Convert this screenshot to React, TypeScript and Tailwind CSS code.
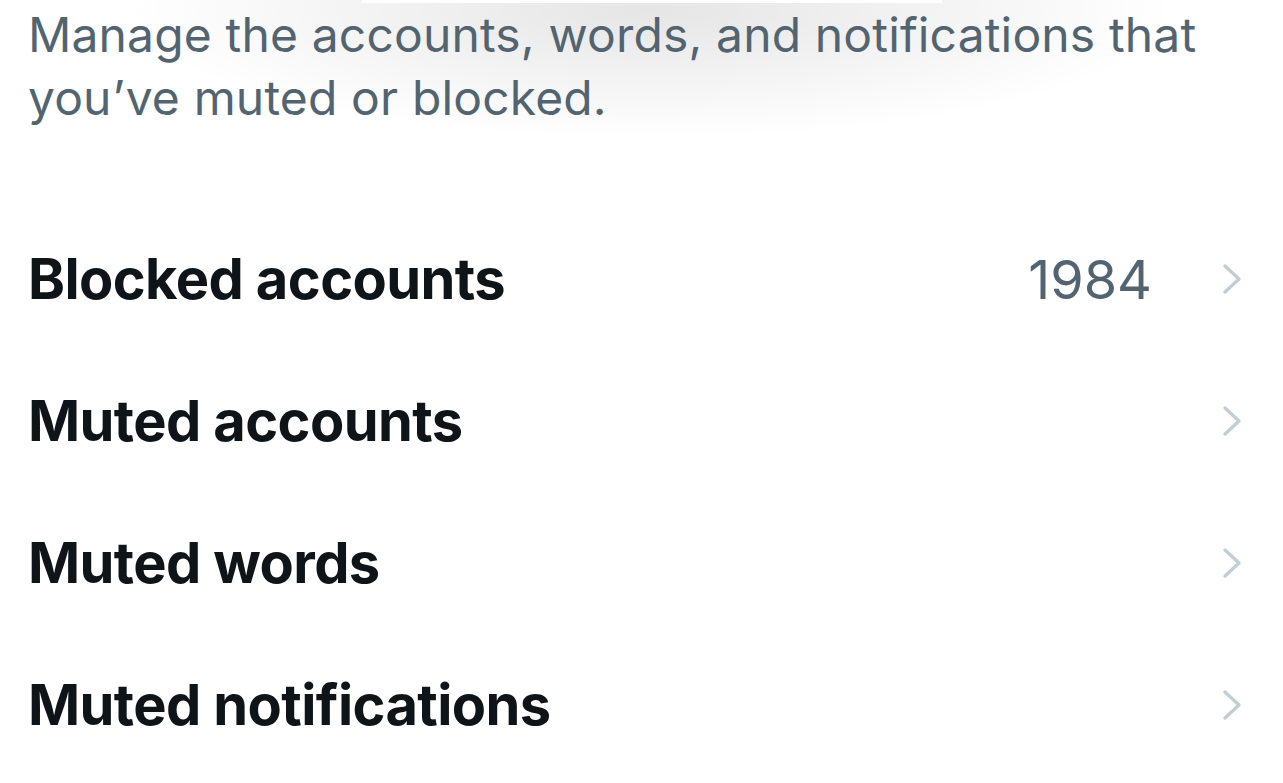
const rows = [
  { label: "Blocked accounts", value: "1984" },
  { label: "Muted accounts" },
  { label: "Muted words" },
  { label: "Muted notifications" },
];

function Chevron() {
  return (
    <svg viewBox="0 0 20 32" className="h-[32px] w-[20px]" fill="none">
      <path d="M3 3l14 13-14 13" stroke="#c3cdd4" strokeWidth="3.4" strokeLinecap="round" strokeLinejoin="round" />
    </svg>
  );
}

export default function App() {
  return (
    <div className="relative h-[783px] w-[1283px] overflow-hidden bg-white font-['Inter',sans-serif]">
      {/* blurred header shadow bleeding in from above */}
      <div className="pointer-events-none absolute -top-[120px] left-[120px] h-[260px] w-[1060px] rounded-full bg-[radial-gradient(ellipse_at_center,rgba(0,0,0,0.10),rgba(0,0,0,0)_70%)]" />
      <div className="pointer-events-none absolute left-[362px] top-0 h-[3px] w-[580px] bg-white" />

      <div className="relative px-[28px]">
        <p className="pt-[3px] text-[48px] leading-[63px] tracking-[0.15px] text-[#536471]">
          Manage the accounts, words, and notifications that you’ve muted or blocked.
        </p>

        <ul className="mt-[79px]">
          {rows.map(({ label, value }) => (
            <li key={label} className="flex h-[142px] items-center">
              <span className="flex-1 text-[56px] font-bold tracking-[-0.6px] text-[#0f1419]">{label}</span>
              {value && <span className="mr-[70px] text-[54px] text-[#536471]">{value}</span>}
              <span className="mr-[13px]">
                <Chevron />
              </span>
            </li>
          ))}
        </ul>
      </div>
    </div>
  );
}
